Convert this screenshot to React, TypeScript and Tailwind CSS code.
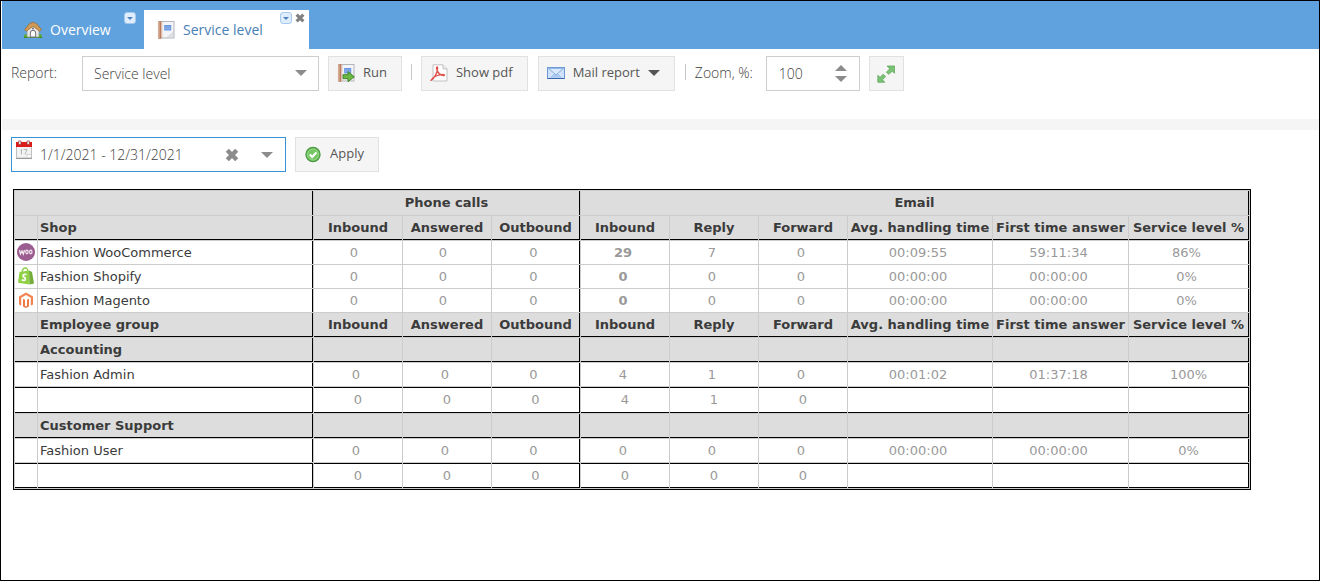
import { useId, useState } from "react";
import type { ReactNode } from "react";

function HouseIcon() {
  return (
    <svg viewBox="0 0 18 18" className="size-[18px]" aria-hidden="true">
      <path d="M0 14.500c1-2 3-2 4-.5h10c1-1.500 3-1.500 4 .5v2.200H0z" fill="#5dab3f" />
      <path d="M0 15.800h18v1.200H0z" fill="#3f8a2c" />
      <path d="M3.200 8.500L9 4l5.800 4.500V16H3.200z" fill="#ece9e6" stroke="#a9a39c" strokeWidth=".6" />
      <path d="M6.300 16v-4a2.700 2.700 0 0 1 5.400 0v4z" fill="#fafafa" stroke="#6d7078" strokeWidth="1" />
      <path d="M9 1.200L5.500 2.700.6 8.600l1.700 1.700L9 5.300l6.700 5 1.700-1.700-4.900-5.900z" fill="#cf9a55" stroke="#9c6b34" strokeWidth=".8" strokeLinejoin="round" />
      <circle cx="9" cy="7.600" r="1" fill="#6d6f78" />
    </svg>
  );
}

function NotebookIcon({ run = false }: { run?: boolean }) {
  return (
    <svg viewBox="0 0 18 18" className="size-[18px] shrink-0" aria-hidden="true">
      <rect x="2.500" y=".5" width="14.500" height="16.500" fill="#f2f4f8" stroke="#b4b6ba" />
      <rect x="1.200" y=".3" width="3.200" height="17.400" fill="#bd7a5a" />
      <path d="M.5 2h2.500M.5 4h2.500M.5 6h2.500M.5 8h2.500M.5 10h2.500M.5 12h2.500M.5 14h2.500M.5 16h2.500" stroke="#e9d3c4" strokeWidth=".8" />
      <path d="M5 1v16" stroke="#dcc0b2" strokeWidth=".8" />
      <rect x="7.200" y="4" width="7" height="5.500" fill="#6795dd" />
      <path d="M8 6h5.500M8 7.800h5.500" stroke="#9dbdf0" strokeWidth=".8" />
      {run ? (
        <path d="M6 10.700h5V7.600l6.300 5.200-6.300 4.900v-3H6z" fill="#6cb845" stroke="#3b7d24" strokeWidth=".9" />
      ) : (
        <path d="M10 16.700l6.700-6v6z" fill="#dde0e5" stroke="#c2c5ca" strokeWidth=".5" />
      )}
    </svg>
  );
}

function PdfIcon() {
  return (
    <svg viewBox="0 0 18 18" className="size-[18px]" aria-hidden="true">
      <path d="M3 .8h10l4 4V17H3z" fill="#fdfdfd" stroke="#c2c2c2" />
      <path d="M13 .8v4h4" fill="#eee" stroke="#c2c2c2" />
      <path d="M1 16.300c3.300-2 6.700-7.500 6.600-12.300C7.500 2.200 6 3 6.700 5.300c1 3.800 3.600 5.900 7 6.300 1.300 0 .7-1.500-1.300-1.200C8.500 10.800 3.500 12.500 1 16.300z" fill="none" stroke="#e0524f" strokeWidth="1.400" strokeLinejoin="round" />
    </svg>
  );
}

function MailIcon() {
  return (
    <svg viewBox="0 0 18 18" className="size-[18px]" aria-hidden="true">
      <rect x=".5" y="3.500" width="17" height="11" fill="#cfe1fa" stroke="#6c97d2" />
      <path d="M1.500 13.800l5.500-5h4l5.500 5" fill="#a9c8f2" stroke="#f4f9ff" strokeWidth=".9" />
      <path d="M1.500 4.300L9 11l7.500-6.700z" fill="#dbe9fc" stroke="#85ace3" strokeWidth="1" />
      <path d="M.5 14.500h17" stroke="#3b68ac" />
    </svg>
  );
}

function ResizeIcon() {
  return (
    <svg viewBox="0 0 18 18" className="size-[18px]" aria-hidden="true">
      <path d="M10 1h7.500v7.200l-2.200-2-3.600 3.100-2.300-2 3.300-3.500zM.8 10.300l2.200 2 3.100-3 2.600 2.200-3.200 3.300 2.300 2.500H.8z" fill="#7cc176" stroke="#53a44f" strokeWidth=".7" />
      <path d="M7.500 7.500l3 3" stroke="#f5f5f5" strokeWidth="1" />
    </svg>
  );
}

function CalendarIcon() {
  return (
    <svg viewBox="0 0 18 20" className="h-5 w-[18px] shrink-0" aria-hidden="true">
      <rect x="1.500" y="4" width="15" height="14" fill="#f3f3f3" stroke="#c0c0c0" />
      <path d="M1 2h16v5H1z" fill="#dc1b1b" />
      <path d="M3.500 1h2.500v3.500H3.500zM12 1h2.500v3.500H12z" fill="#e4e4e4" stroke="#a33c3c" strokeWidth=".7" />
      <path d="M5.500 10.500l1-1v5M8.500 9.500H12l-2 5" fill="none" stroke="#b4b4b4" />
      <path d="M12 18v-3.500h4.500" fill="#fff" stroke="#c6c6c6" strokeWidth=".8" />
      <path d="M1 18.500h16" stroke="#999" />
    </svg>
  );
}

function CheckIcon() {
  return (
    <svg viewBox="0 0 18 18" className="size-[18px]" aria-hidden="true">
      <circle cx="9" cy="9.500" r="7.100" fill="#5fb94f" stroke="#4f9a45" strokeWidth="1.200" />
      <circle cx="9" cy="9.500" r="5.600" fill="#74c763" stroke="#a6dd99" strokeWidth=".8" />
      <path d="M5.800 9.500l2.400 2.400 4.200-4.400" fill="none" stroke="#fff" strokeWidth="2.200" />
    </svg>
  );
}

function CrossIcon({ className }: { className: string }) {
  return (
    <svg viewBox="0 0 14 14" className={className} aria-hidden="true">
      <path d="M2.300 2.300l9.400 9.400M11.700 2.300l-9.400 9.400" stroke="currentColor" strokeWidth="4.400" />
    </svg>
  );
}

function Triangle({ up = false, className }: { up?: boolean; className: string }) {
  return (
    <svg viewBox="0 0 12 6" className={className} aria-hidden="true">
      <path d={up ? "M0 6L6 0l6 6z" : "M0 0h12L6 6z"} fill="currentColor" />
    </svg>
  );
}

function WooIcon() {
  return (
    <svg viewBox="0 0 18 18" className="mx-auto mb-0.5 block size-[18px]" aria-hidden="true">
      <circle cx="9" cy="9" r="9" fill="#9b5c8f" />
      <path d="M2.500 7l1 4 1.500-3 1.300 3L7.500 7" fill="none" stroke="#f3e9f1" strokeWidth="1.300" />
      <ellipse cx="9.900" cy="9" rx="1.200" ry="1.800" fill="none" stroke="#f3e9f1" strokeWidth="1.200" />
      <ellipse cx="13.800" cy="9" rx="1.200" ry="1.800" fill="none" stroke="#f3e9f1" strokeWidth="1.200" />
    </svg>
  );
}

function ShopifyIcon() {
  return (
    <svg viewBox="0 0 18 18" className="mx-auto mb-0.5 block size-[18px]" aria-hidden="true">
      <path d="M2.500 5l9.500-1.500.5 14L1 15.700z" fill="#8fd045" />
      <path d="M12 3.500L15 5l2 11.500-4.500 1z" fill="#74ac3c" />
      <path d="M5 5.500C5.300 2.500 7 1 8.500 1s2.300 1.500 2.200 3.500" fill="none" stroke="#8fd045" strokeWidth="1.300" />
      <path d="M9.500 7.800C7.500 6.700 5.700 7.800 6.100 9.100c.3 1.100 2.500 1.500 2.300 3-.2 1.600-2.200 1.700-3.600.7" fill="none" stroke="#fff" strokeWidth="1.700" />
    </svg>
  );
}

function MagentoIcon() {
  return (
    <svg viewBox="0 0 18 18" className="mx-auto mb-0.5 block size-[18px]" aria-hidden="true">
      <path d="M9 1.500L2 5.500v8l2.200 1.300V6.700L9 4l4.800 2.700v8.100l2.200-1.300v-8z" fill="#f28350" />
      <path d="M6 7.700v7.800l3 1.500 3-1.500V7.700l-2 1v6l-1 .7-1-.7v-6z" fill="#f0793f" />
    </svg>
  );
}

function TabMenu({ label }: { label: string }) {
  return (
    <button aria-label={label} className="flex h-3 w-3 items-center justify-center rounded-[3px] border border-[#a6c8ee] bg-[#dfedfc] text-[#4b83c4]">
      <Triangle className="h-[3px] w-1.5" />
    </button>
  );
}

function ToolButton({ icon, children }: { icon: ReactNode; children: ReactNode }) {
  return (
    <button className="flex h-[35px] items-center gap-2 border border-[#e1e1e1] bg-[#f5f5f5] pr-3.5 pb-0.5 pl-2 text-[#555]">
      {icon}
      {children}
    </button>
  );
}

const HEADINGS = ["Inbound", "Answered", "Outbound", "Inbound", "Reply", "Forward", "Avg. handling time", "First time answer", "Service level %"];

const endsSection = (i: number) => i === 2 || i === 8;

function HeadingRow({ title }: { title: string }) {
  return (
    <tr className="h-6 bg-[#ddd] text-[#3b3b3b]">
      <td className="border-b border-black" />
      <th scope="col" className="border-r border-b border-black px-0.5 text-left">{title}</th>
      {HEADINGS.map((h, i) => (
        <th key={i} scope="col" className={`border-b border-black whitespace-nowrap ${endsSection(i) ? "border-r" : ""}`}>{h}</th>
      ))}
    </tr>
  );
}

function GroupRow({ title }: { title: string }) {
  return (
    <tr className="h-6 bg-[#ddd] text-[#3b3b3b]">
      <td className="border-b border-black" />
      <th scope="row" className="border-r border-b border-black px-0.5 text-left">{title}</th>
      {HEADINGS.map((_, i) => (
        <td key={i} className={`border-b border-black ${endsSection(i) ? "border-r" : ""}`} />
      ))}
    </tr>
  );
}

function DataRow({ icon, title, values, shop = false }: { icon?: ReactNode; title: string; values: string[]; shop?: boolean }) {
  return (
    <tr className="h-[23px] bg-white">
      <td>{icon}</td>
      <th scope="row" className="border-r border-black px-0.5 text-left font-normal text-[#3b3b3b]">{title}</th>
      {values.map((v, i) => (
        <td
          key={i}
          className={`border-black text-center ${endsSection(i) ? "border-r" : ""} ${shop && i < 2 ? "pr-2" : !shop && i === 8 ? "" : "pr-1"} ${shop && i === 3 ? "font-bold" : ""}`}
        >
          {v}
        </td>
      ))}
    </tr>
  );
}

function TotalRow({ values, last = false }: { values: string[]; last?: boolean }) {
  return (
    <tr className={`bg-white ${last ? "h-[25px]" : "h-[26px]"}`}>
      <td className="border-y border-black" />
      <td className="border-y border-r border-black" />
      {HEADINGS.map((_, i) => (
        <td key={i} className={`border-y border-black text-center ${endsSection(i) ? "border-r" : ""}`}>{values[i]}</td>
      ))}
    </tr>
  );
}

function ReportTable() {
  return (
    <table className="border-separate border-spacing-px border border-black bg-[#ccc] font-['Verdana','DejaVu_Sans',sans-serif] text-[13px] leading-5 text-[#999] [&_td]:py-0 [&_th]:py-0">
      <colgroup>
        <col className="w-[22px]" />
        <col className="w-[275px]" />
        <col className="w-[88px]" />
        <col className="w-[88px]" />
        <col className="w-[88px]" />
        <col className="w-[88px]" />
        <col className="w-[88px]" />
        <col className="w-[88px]" />
        <col className="w-36" />
        <col className="w-[135px]" />
        <col className="w-[120px]" />
      </colgroup>
      <thead>
        <tr className="h-6 bg-[#ddd] text-[#3b3b3b]">
          <td colSpan={2} className="border-r border-black" />
          <th colSpan={3} scope="colgroup" className="border-r border-black">Phone calls</th>
          <th colSpan={6} scope="colgroup" className="border-r border-black">Email</th>
        </tr>
      </thead>
      <tbody>
        <HeadingRow title="Shop" />
        <DataRow shop icon={<WooIcon />} title="Fashion WooCommerce" values={["0", "0", "0", "29", "7", "0", "00:09:55", "59:11:34", "86%"]} />
        <DataRow shop icon={<ShopifyIcon />} title="Fashion Shopify" values={["0", "0", "0", "0", "0", "0", "00:00:00", "00:00:00", "0%"]} />
        <DataRow shop icon={<MagentoIcon />} title="Fashion Magento" values={["0", "0", "0", "0", "0", "0", "00:00:00", "00:00:00", "0%"]} />
        <HeadingRow title="Employee group" />
        <GroupRow title="Accounting" />
        <DataRow title="Fashion Admin" values={["0", "0", "0", "4", "1", "0", "00:01:02", "01:37:18", "100%"]} />
        <TotalRow values={["0", "0", "0", "4", "1", "0"]} />
        <GroupRow title="Customer Support" />
        <DataRow title="Fashion User" values={["0", "0", "0", "0", "0", "0", "00:00:00", "00:00:00", "0%"]} />
        <TotalRow last values={["0", "0", "0", "0", "0", "0"]} />
      </tbody>
    </table>
  );
}

export default function App() {
  const reportId = useId();
  const zoomId = useId();
  const [zoom, setZoom] = useState(100);
  const [dates, setDates] = useState("1/1/2021 - 12/31/2021");

  return (
    <div className="flex min-h-screen flex-col border border-black bg-white pl-px font-['Open_Sans',sans-serif] text-[13px] text-[#404040]">
      <nav className="flex h-12 items-end bg-[#5fa2dd] text-sm">
        <div className="flex h-[39px] w-[142px] items-start pr-2 pl-[22px]">
          <a href="#overview" className="flex h-[39px] flex-1 items-center gap-2 text-white">
            <HouseIcon />
            Overview
          </a>
          <div className="pt-0.5"><TabMenu label="Overview tab menu" /></div>
        </div>
        <div className="flex h-[39px] w-[165px] items-start gap-1 bg-white pr-1 pl-[13px]">
          <a href="#service-level" className="flex h-[39px] flex-1 items-center gap-2 whitespace-nowrap text-[#4a7fb5]">
            <NotebookIcon />
            Service level
          </a>
          <div className="flex items-center gap-[3px] pt-0.5">
            <TabMenu label="Service level tab menu" />
            <button aria-label="Close tab" className="text-[#808080]"><CrossIcon className="size-2.5" /></button>
          </div>
        </div>
      </nav>

      <div className="flex h-[70px] items-start pt-[7px] pl-[9px]">
        <label htmlFor={reportId} className="w-[71px] pt-1.5 text-sm leading-[22px] font-light">Report:</label>
        <div className="relative">
          <select id={reportId} className="h-[35px] w-[237px] appearance-none border border-[#cecece] bg-white pl-[11px] text-sm font-light">
            <option>Service level</option>
          </select>
          <Triangle className="pointer-events-none absolute top-3.5 right-3 h-1.5 w-3 text-[#8c8c8c]" />
        </div>
        <div className="ml-[9px] flex items-start">
          <ToolButton icon={<NotebookIcon run />}>Run</ToolButton>
          <div className="mx-[9px] mt-2 h-4 w-px bg-[#c8c8c8]" />
          <div className="flex gap-2.5">
            <ToolButton icon={<PdfIcon />}>Show pdf</ToolButton>
            <ToolButton icon={<MailIcon />}>
              Mail report
              <Triangle className="h-1.5 w-3 text-[#555]" />
            </ToolButton>
          </div>
          <div className="mr-[9px] ml-2.5 mt-2 h-4 w-px bg-[#c8c8c8]" />
        </div>
        <label htmlFor={zoomId} className="w-[71px] pt-1.5 text-sm leading-[22px] font-light">Zoom, %:</label>
        <div className="flex h-[35px] w-[94px] items-center border border-[#cecece] px-3">
          <input
            id={zoomId}
            type="number"
            value={zoom}
            onChange={(e) => setZoom(Number(e.target.value))}
            className="w-full min-w-0 flex-1 text-sm font-light [appearance:textfield] [&::-webkit-inner-spin-button]:appearance-none"
          />
          <div className="flex flex-col gap-[5px] text-[#8c8c8c]">
            <button aria-label="Increase zoom" onClick={() => setZoom(zoom + 1)}><Triangle up className="h-1.5 w-3" /></button>
            <button aria-label="Decrease zoom" onClick={() => setZoom(zoom - 1)}><Triangle className="h-1.5 w-3" /></button>
          </div>
        </div>
        <button aria-label="Fit to window" className="ml-[9px] flex size-[35px] items-center justify-center border border-[#e1e1e1] bg-[#f5f5f5]">
          <ResizeIcon />
        </button>
      </div>

      <div className="h-[11px] bg-[#f5f5f5]" />

      <div className="flex gap-[9px] pt-[7px] pl-[9px]">
        <div className="flex h-[35px] w-[275px] items-center border border-[#3892d3] pr-3 pl-[3px]">
          <div className="self-start pt-0.5"><CalendarIcon /></div>
          <input
            aria-label="Date range"
            value={dates}
            onChange={(e) => setDates(e.target.value)}
            className="ml-[7px] min-w-0 flex-1 text-sm font-light"
          />
          <button aria-label="Clear date range" onClick={() => setDates("")} className="text-[#8c8c8c]"><CrossIcon className="size-3.5" /></button>
          <button aria-label="Choose date range" className="ml-[22px] text-[#8c8c8c]"><Triangle className="h-1.5 w-3" /></button>
        </div>
        <ToolButton icon={<CheckIcon />}>Apply</ToolButton>
      </div>

      <main className="pt-[17px] pl-[11px]">
        <ReportTable />
      </main>
    </div>
  );
}
